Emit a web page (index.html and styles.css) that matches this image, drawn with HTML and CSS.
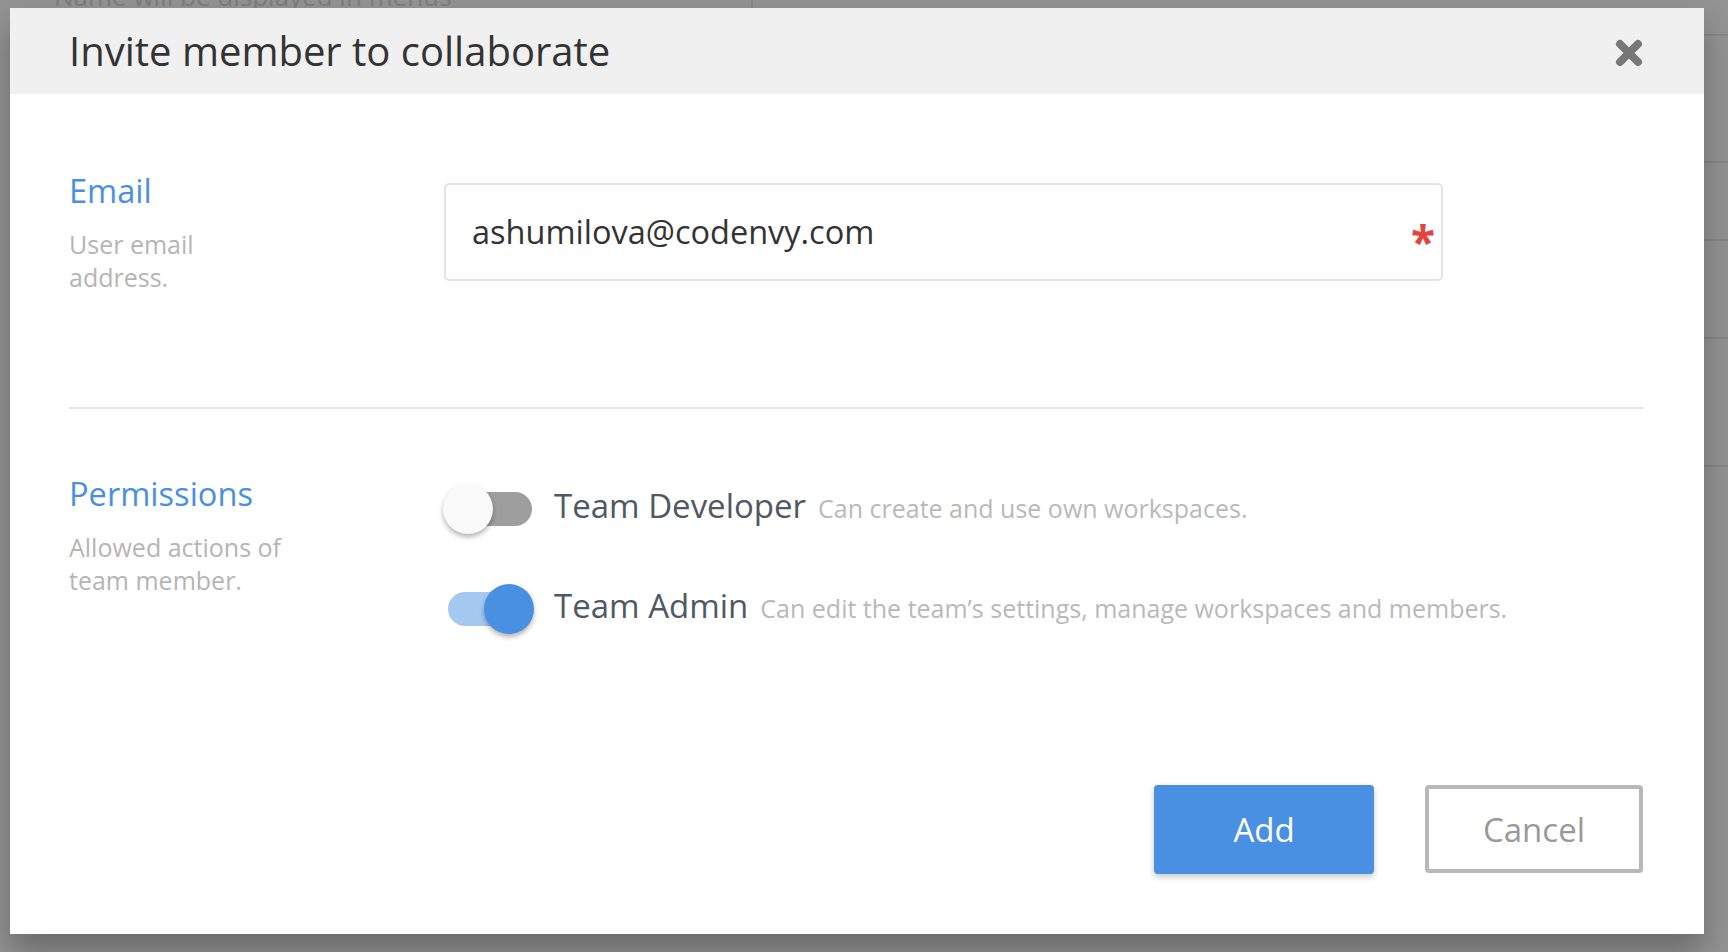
FILE: index.html
```html
<!DOCTYPE html>
<html lang="en">
<head>
<meta charset="utf-8">
<title>Invite member to collaborate</title>
<link rel="stylesheet" href="styles.css">
</head>
<body>
<div class="page">
  <div class="page-main">
    <div class="page-col page-col-left"><span class="page-hint">Name will be displayed in menus</span></div>
    <div class="page-col page-col-right"></div>
  </div>
  <div class="page-side">
    <div class="side-row h35"></div>
    <div class="side-row h127"></div>
    <div class="side-row h78"></div>
    <div class="side-row h98"></div>
    <div class="side-row h128"></div>
  </div>
</div>

<div class="modal">
  <div class="modal-header">
    <h1 class="modal-title">Invite member to collaborate</h1>
    <button class="close-btn" aria-label="Close">
      <svg width="28" height="28" viewBox="0 0 28 28"><path d="M5 5 L23 23 M23 5 L5 23" stroke="#777" stroke-width="8" stroke-linecap="round" fill="none"/></svg>
    </button>
  </div>
  <div class="modal-body">
    <div class="section section-email">
      <div class="section-label">
        <div class="label-title">Email</div>
        <div class="label-desc">User email address.</div>
      </div>
      <div class="section-control control-email">
        <div class="input-wrap">
          <div class="input">ashumilova@codenvy.com</div>
          <span class="required">*</span>
        </div>
      </div>
    </div>
    <div class="divider"></div>
    <div class="section section-perm">
      <div class="section-label">
        <div class="label-title">Permissions</div>
        <div class="label-desc">Allowed actions of team member.</div>
      </div>
      <div class="section-control control-perm">
        <div class="perm-row">
          <div class="toggle"><span class="track"></span><span class="knob"></span></div>
          <div class="perm-text"><span class="perm-name">Team Developer</span><span class="perm-desc">Can create and use own workspaces.</span></div>
        </div>
        <div class="perm-row">
          <div class="toggle on"><span class="track"></span><span class="knob"></span></div>
          <div class="perm-text"><span class="perm-name">Team Admin</span><span class="perm-desc">Can edit the team’s settings, manage workspaces and members.</span></div>
        </div>
      </div>
    </div>
  </div>
  <div class="modal-footer">
    <button class="btn btn-primary">Add</button>
    <button class="btn btn-secondary">Cancel</button>
  </div>
</div>
</body>
</html>
```

FILE: styles.css
```css
* { box-sizing: border-box; }
html, body { margin: 0; padding: 0; }
body {
  width: 1728px;
  height: 952px;
  overflow: hidden;
  background: #939393;
  font-family: "Open Sans", "Noto Sans", sans-serif;
  position: relative;
}

/* faint page behind the overlay */
.page { display: flex; height: 952px; }
.page-main { flex: 1; display: flex; }
.page-col-left { width: 753px; border-right: 2px solid #878787; height: 40px; padding-left: 54px; overflow: hidden; }
.page-hint { display: block; font-size: 26px; line-height: 26px; margin-top: -17px; color: #7d7d7d; }
.page-side { width: 140px; display: flex; flex-direction: column; }
.side-row { border-bottom: 2px solid #878787; }
.h35 { height: 36px; }
.h127 { height: 127px; }
.h78 { height: 78px; }
.h98 { height: 98px; }
.h128 { height: 128px; }

/* modal */
.modal {
  position: absolute;
  left: 10px;
  top: 8px;
  width: 1694px;
  height: 926px;
  background: #fff;
  display: flex;
  flex-direction: column;
  box-shadow: 0 18px 30px rgba(0, 0, 0, 0.28);
}
.modal-header {
  height: 86px;
  flex: none;
  background: #f0f0f0;
  display: flex;
  align-items: center;
  justify-content: space-between;
  padding: 0 61px 0 59px;
}
.modal-title {
  margin: 0;
  font-size: 40px;
  font-weight: 400;
  color: #333;
  line-height: 54px;
}
.close-btn {
  border: 0;
  background: none;
  padding: 0;
  width: 28px;
  height: 28px;
  margin-top: 4px;
  display: block;
}
.close-btn svg { display: block; }

.modal-body { padding: 77px 60px 0 59px; }

.section { display: flex; }
.section-email { height: 236px; }
.section-perm { padding-top: 65px; }
.section-label { width: 375px; flex: none; }
.label-title { font-size: 32.6px; line-height: 40px; color: #4a90e2; }
.label-desc { margin-top: 17px; font-size: 25px; line-height: 33px; color: #b5b5b5; max-width: 222px; }
.section-control { flex: 1; }

.control-email { padding-top: 12px; }
.input-wrap { position: relative; width: 999px; }
.input {
  height: 98px;
  border: 2px solid #e3e3e3;
  border-radius: 5px;
  padding: 0 26px;
  display: flex;
  align-items: center;
  font-size: 32.5px;
  line-height: 40px;
  color: #333;
}
.required {
  position: absolute;
  right: 8px;
  top: 36px;
  font-size: 44px;
  line-height: 44px;
  font-weight: 700;
  color: #e2433a;
}

.divider { height: 2px; background: #e6e6e6; }

.control-perm { padding-top: 10px; display: flex; flex-direction: column; gap: 50px; }
.perm-row { display: flex; align-items: center; height: 50px; }
.toggle { position: relative; width: 91px; height: 50px; flex: none; margin-left: -1px; }
.track {
  position: absolute;
  left: 5px;
  top: 8px;
  width: 84px;
  height: 34px;
  border-radius: 17px;
  background: #9e9e9e;
}
.knob {
  position: absolute;
  left: 0;
  top: 0;
  width: 50px;
  height: 50px;
  border-radius: 50%;
  background: #fafafa;
  box-shadow: 0 3px 5px rgba(0, 0, 0, 0.3);
}
.toggle.on .track { background: #a5c8f1; }
.toggle.on .knob { left: 41px; background: #4a90e2; }

.perm-text { display: flex; align-items: baseline; gap: 12px; margin-left: 20px; margin-bottom: 6px; }
.perm-name { font-size: 33px; line-height: 50px; color: #4f5964; }
.perm-desc { font-size: 25px; color: #b9b9b9; }

.modal-footer {
  margin-top: auto;
  display: flex;
  justify-content: flex-end;
  gap: 51px;
  padding: 0 61px 60px 0;
}
.btn {
  font-family: "Open Sans", "Noto Sans", sans-serif;
  font-size: 33px;
  border-radius: 4px;
  height: 89px;
  cursor: pointer;
}
.btn-primary {
  width: 220px;
  background: #4a90e2;
  color: #fff;
  border: 0;
  box-shadow: 0 3px 6px rgba(0, 0, 0, 0.22);
}
.btn-secondary {
  width: 218px;
  height: 88px;
  background: #fff;
  color: #999;
  border: 4px solid #b8b8b8;
}
```
